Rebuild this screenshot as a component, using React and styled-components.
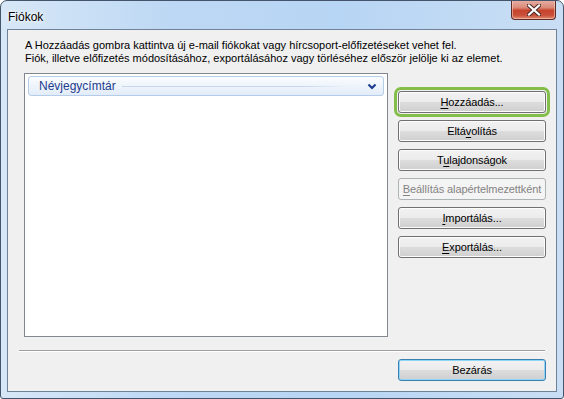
import React from 'react';
import styled, { createGlobalStyle } from 'styled-components';

const GlobalStyle = createGlobalStyle`
  html, body {
    margin: 0;
    padding: 0;
    background: #ffffff;
  }
  body {
    font-family: "Liberation Sans", Arial, sans-serif;
  }
`;

const actions = [
  { label: 'Hozzáadás...', key: 0, focused: true },
  { label: 'Eltávolítás', key: 4 },
  { label: 'Tulajdonságok', key: 1 },
  { label: 'Beállítás alapértelmezettként', key: 0, disabled: true },
  { label: 'Importálás...', key: 0 },
  { label: 'Exportálás...', key: 0 },
];

function AccessLabel({ text, index }) {
  if (index === undefined || index < 0) return text;
  return (
    <>
      {text.slice(0, index)}
      <u>{text[index]}</u>
      {text.slice(index + 1)}
    </>
  );
}

function CloseGlyph() {
  return (
    <svg width="14" height="12" viewBox="0 0 14 12">
      <path d="M2 1.5 L12 10.5 M12 1.5 L2 10.5" stroke="#4a2a26" strokeWidth="4.2" strokeLinecap="square" />
      <path d="M2 1.5 L12 10.5 M12 1.5 L2 10.5" stroke="#ffffff" strokeWidth="2.2" strokeLinecap="square" />
    </svg>
  );
}

function Chevron() {
  return (
    <svg width="10" height="7" viewBox="0 0 10 7">
      <path d="M1.5 1.5 L5 5 L8.5 1.5" fill="none" stroke="#1d3e8f" strokeWidth="2.2" />
    </svg>
  );
}

function App() {
  return (
    <>
      <GlobalStyle />
      <Window>
        <TitleBar>
          <Title>Fiókok</Title>
          <CloseButton>
            <CloseGlyph />
          </CloseButton>
        </TitleBar>
        <Client>
          <Intro>
            A Hozzáadás gombra kattintva új e-mail fiókokat vagy hírcsoport-előfizetéseket vehet fel.
            <br />
            Fiók, illetve előfizetés módosításához, exportálásához vagy törléséhez először jelölje ki az elemet.
          </Intro>
          <MainRow>
            <ListBox>
              <GroupHeader>
                <GroupTitle>Névjegycímtár</GroupTitle>
                <GroupLine />
                <Chevron />
              </GroupHeader>
            </ListBox>
            <ButtonColumn>
              {actions.map((a) => (
                <Button key={a.label} disabled={a.disabled} $focused={a.focused}>
                  <AccessLabel text={a.label} index={a.key} />
                </Button>
              ))}
            </ButtonColumn>
          </MainRow>
          <Separator />
          <Footer>
            <Button $default>Bezárás</Button>
          </Footer>
        </Client>
      </Window>
    </>
  );
}

export default App;

const Window = styled.div`
  box-sizing: border-box;
  width: 564px;
  height: 399px;
  border: 1px solid #44556b;
  border-radius: 7px 7px 3px 3px;
  background: linear-gradient(90deg, #d7e7f7 0%, #bdd8f4 30%, #b7d5f4 60%, #c9def4 100%);
  display: flex;
  flex-direction: column;
  overflow: hidden;
`;

const TitleBar = styled.div`
  height: 28px;
  display: flex;
  justify-content: space-between;
  align-items: flex-start;
  padding-left: 7px;
  padding-right: 7px;
`;

const Title = styled.div`
  font-size: 12px;
  color: #000000;
  line-height: 16px;
  margin-top: 8px;
  text-shadow: 0 0 6px #ffffff, 0 0 3px #ffffff;
`;

const CloseButton = styled.div`
  box-sizing: border-box;
  width: 45px;
  height: 20px;
  margin-top: -1px;
  border: 1px solid #5a2d26;
  border-top: none;
  border-radius: 0 0 4px 4px;
  background: linear-gradient(#e8b1a6 0%, #d98a78 40%, #c7432c 55%, #c8503a 80%, #e08a6f 100%);
  box-shadow: inset 0 0 0 1px rgba(255, 210, 200, 0.55);
  display: flex;
  align-items: center;
  justify-content: center;
`;

const Client = styled.div`
  flex: 1;
  margin: 0 6px 6px 6px;
  border: 1px solid #6f8297;
  background: #f0f0f0;
  padding: 9px 10px 10px 16px;
  display: flex;
  flex-direction: column;
`;

const Intro = styled.div`
  font-size: 11px;
  line-height: 13px;
  color: #000000;
  padding-left: 1px;
  white-space: nowrap;
`;

const MainRow = styled.div`
  margin-top: 8px;
  display: flex;
  gap: 10px;
`;

const ListBox = styled.div`
  box-sizing: border-box;
  width: 364px;
  height: 264px;
  border: 1px solid #828790;
  background: #ffffff;
  padding: 2px 3px;
`;

const GroupHeader = styled.div`
  box-sizing: border-box;
  height: 20px;
  border: 1px solid #b5cdea;
  border-radius: 3px;
  background: linear-gradient(#fbfdff 0%, #eef4fb 50%, #e2ecf8 100%);
  display: flex;
  align-items: center;
  padding: 0 6px 0 10px;
  gap: 6px;
`;

const GroupTitle = styled.span`
  font-size: 12px;
  color: #1e3c8e;
`;

const GroupLine = styled.div`
  flex: 1;
  height: 1px;
  margin-right: 12px;
  background: linear-gradient(90deg, #c5d8ee 0%, #c5d8ee 80%, rgba(197, 216, 238, 0) 100%);
`;

const ButtonColumn = styled.div`
  display: flex;
  flex-direction: column;
  gap: 7px;
  padding-top: 18px;
`;

const Button = styled.button`
  box-sizing: border-box;
  width: 148px;
  height: 22px;
  padding: 0;
  font-family: "Liberation Sans", Arial, sans-serif;
  font-size: 11px;
  font-weight: 400;
  letter-spacing: -0.1px;
  color: #000000;
  border: 1px solid ${(p) => (p.$default ? '#3c7fb1' : '#707070')};
  border-radius: 3px;
  background: linear-gradient(#f2f2f2 0%, #ebebeb 50%, #dddddd 50%, #cfcfcf 100%);
  box-shadow: ${(p) => {
    if (p.$focused) return 'inset 0 0 0 1px #fcfcfc, 0 0 0 1px #f0f0f0, 0 0 0 4px #84bd4a';
    if (p.$default) return 'inset 0 0 0 1px #8fd6f6';
    return 'inset 0 0 0 1px #fcfcfc';
  }};
  text-align: center;

  &:disabled {
    color: #838383;
    border-color: #adb2b5;
    background: #f4f4f4;
    box-shadow: none;
  }

  u {
    text-decoration-thickness: 1px;
    text-underline-offset: 2px;
  }
`;

const Separator = styled.div`
  margin: 13px 1px 0 -5px;
  height: 1px;
  background: #a0a0a0;
  box-shadow: 0 1px 0 #ffffff;
`;

const Footer = styled.div`
  margin-top: 8px;
  display: flex;
  justify-content: flex-end;
`;
